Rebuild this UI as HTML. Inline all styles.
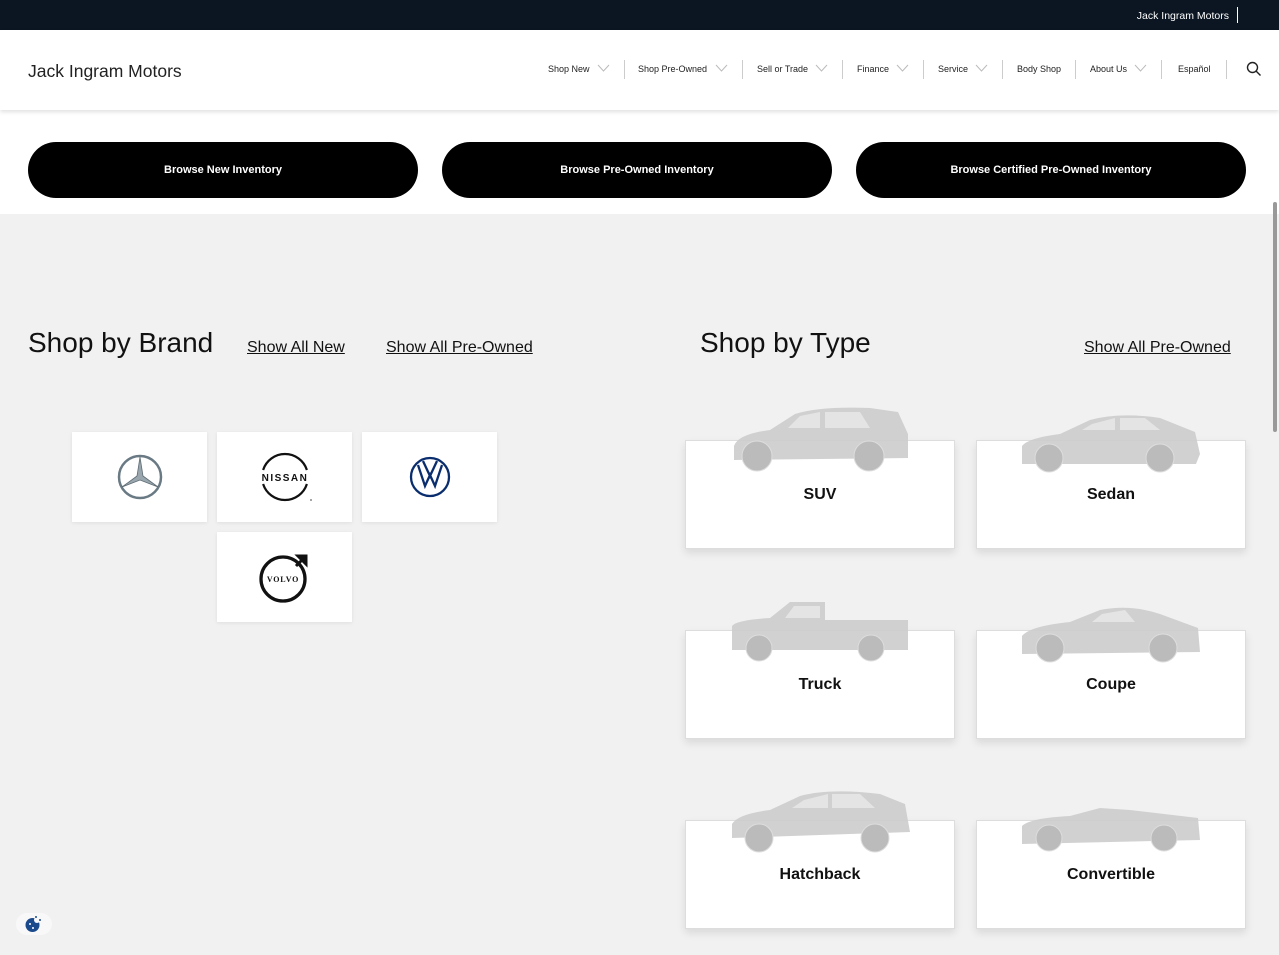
<!DOCTYPE html>
<html><head><meta charset="utf-8"><style>
*{margin:0;padding:0;box-sizing:border-box}
body{width:1279px;height:955px;overflow:hidden;background:#f1f1f1;font-family:"Liberation Sans",sans-serif;position:relative}
.top{position:absolute;left:0;top:0;width:1279px;height:30px;background:#0b1622;color:#fff;font-size:10.5px}
.top span{position:absolute;right:50px;top:10px}
.top i{position:absolute;left:1237px;top:7px;width:1px;height:16px;background:#fff}
.hdr{position:absolute;left:0;top:30px;width:1279px;height:80px;background:#fff;box-shadow:0 2px 4px rgba(0,0,0,.12);z-index:2}
.logo{position:absolute;left:28px;top:31px;font-size:17.5px;color:#222}
.nav{position:absolute;top:34px;font-size:9px;color:#222;white-space:nowrap}
.sep{position:absolute;top:30px;width:1px;height:19px;background:#ccc}
.chev{position:absolute;top:34px}
.btnrow{position:absolute;left:0;top:110px;width:1279px;height:104px;background:#fff}
.btn{position:absolute;top:32px;width:390px;height:56px;border-radius:28px;background:#000;color:#fff;font-size:11px;font-weight:bold;text-align:center;line-height:57px}
h2{position:absolute;font-weight:normal;font-size:28px;color:#111}
.lnk{position:absolute;font-size:16px;color:#111;text-decoration:underline}
.tile{position:absolute;width:135px;height:90px;background:#fff;box-shadow:0 1px 4px rgba(0,0,0,.08);display:flex;align-items:center;justify-content:center}
.card{position:absolute;width:270px;height:109px;background:#fff;border:1px solid #ddd;box-shadow:0 4px 8px rgba(0,0,0,.1);font-size:16px;font-weight:bold;color:#111;text-align:center;padding-top:45px}
.car{position:absolute}
</style></head><body>
<div class="top"><span>Jack Ingram Motors</span><i></i></div>
<div class="hdr">
<div class="logo">Jack Ingram Motors</div>
<div class="nav" style="left:548px">Shop New</div>
<div class="nav" style="left:638px">Shop Pre-Owned</div>
<div class="nav" style="left:757px">Sell or Trade</div>
<div class="nav" style="left:857px">Finance</div>
<div class="nav" style="left:938px">Service</div>
<div class="nav" style="left:1017px">Body Shop</div>
<div class="nav" style="left:1090px">About Us</div>
<div class="nav" style="left:1178px">Español</div>
<svg class="chev" style="left:597px" width="13" height="8"><path d="M1 1l5.5 6 5.5-6" fill="none" stroke="#bbb"/></svg>
<svg class="chev" style="left:715px" width="13" height="8"><path d="M1 1l5.5 6 5.5-6" fill="none" stroke="#bbb"/></svg>
<svg class="chev" style="left:815px" width="13" height="8"><path d="M1 1l5.5 6 5.5-6" fill="none" stroke="#bbb"/></svg>
<svg class="chev" style="left:896px" width="13" height="8"><path d="M1 1l5.5 6 5.5-6" fill="none" stroke="#bbb"/></svg>
<svg class="chev" style="left:975px" width="13" height="8"><path d="M1 1l5.5 6 5.5-6" fill="none" stroke="#bbb"/></svg>
<svg class="chev" style="left:1134px" width="13" height="8"><path d="M1 1l5.5 6 5.5-6" fill="none" stroke="#bbb"/></svg>
<div class="sep" style="left:624px"></div><div class="sep" style="left:742px"></div><div class="sep" style="left:842px"></div><div class="sep" style="left:923px"></div><div class="sep" style="left:1002px"></div><div class="sep" style="left:1075px"></div><div class="sep" style="left:1161px"></div><div class="sep" style="left:1226px"></div>
<svg style="position:absolute;left:1246px;top:31px" width="16" height="16"><circle cx="6.5" cy="6.5" r="5" fill="none" stroke="#222" stroke-width="1.4"/><path d="M10 10l4.5 4.5" stroke="#222" stroke-width="1.4"/></svg>
</div>
<div class="btnrow">
<div class="btn" style="left:28px">Browse New Inventory</div>
<div class="btn" style="left:442px">Browse Pre-Owned Inventory</div>
<div class="btn" style="left:856px">Browse Certified Pre-Owned Inventory</div>
</div>
<div style="position:absolute;left:1273px;top:202px;width:4px;height:230px;background:#999;border-radius:2px"></div>
<h2 style="left:28px;top:327px">Shop by Brand</h2>
<div class="lnk" style="left:247px;top:339px">Show All New</div>
<div class="lnk" style="left:386px;top:339px">Show All Pre-Owned</div>
<h2 style="left:700px;top:327px">Shop by Type</h2>
<div class="lnk" style="left:1084px;top:339px">Show All Pre-Owned</div>

<div class="tile" style="left:72px;top:432px"><svg width="46" height="46" viewBox="0 0 46 46"><circle cx="23" cy="23" r="21" fill="none" stroke="#6a7a84" stroke-width="2.5"/><path d="M23 3L26 22L41 33L23 26L5 33L20 22Z" fill="#9aa6ad" stroke="#5d6b73" stroke-width=".8"/></svg></div>
<div class="tile" style="left:217px;top:432px"><svg width="62" height="54" viewBox="0 0 62 54"><path d="M9.1 20A23 23 0 0 1 52.9 20M9.1 34A23 23 0 0 0 52.9 34" fill="none" stroke="#111" stroke-width="2.2"/><text x="31" y="31" font-size="10" font-weight="bold" letter-spacing="1.5" text-anchor="middle" font-family="Liberation Sans" fill="#111">NISSAN</text><circle cx="57" cy="50" r="1" fill="#888"/></svg></div>
<div class="tile" style="left:362px;top:432px"><svg width="42" height="42" viewBox="0 0 42 42"><circle cx="21" cy="21" r="19" fill="none" stroke="#0a2d6e" stroke-width="2.3"/><path d="M9 9L16 30L21 19L26 30L33 9M14 5L21 20L28 5" fill="none" stroke="#0a2d6e" stroke-width="2.3"/></svg></div>
<div class="tile" style="left:217px;top:532px"><svg width="54" height="54" viewBox="0 0 54 54"><circle cx="25" cy="29" r="22" fill="none" stroke="#111" stroke-width="3.3"/><path d="M38 16L46 8M40 6H48V14Z" stroke="#111" stroke-width="3" fill="#111"/><text x="25" y="32" font-size="8" font-weight="bold" letter-spacing=".8" text-anchor="middle" font-family="Liberation Serif" fill="#111">VOLVO</text></svg></div>

<div class="card" style="left:685px;top:440px">SUV</div>
<div class="card" style="left:976px;top:440px">Sedan</div>
<div class="card" style="left:685px;top:630px">Truck</div>
<div class="card" style="left:976px;top:630px">Coupe</div>
<div class="card" style="left:685px;top:820px">Hatchback</div>
<div class="card" style="left:976px;top:820px">Convertible</div>

<svg class="car" style="left:730px;top:404px" width="180" height="70" viewBox="0 0 180 70"><path d="M4 42Q8 30 40 26L65 10Q90 2 140 4L168 8L178 30L178 54L4 56Z" fill="#ccc" opacity=".9"/><path d="M70 12L90 8V24H58ZM95 8H130L140 24H95Z" fill="#e4e4e4"/><circle cx="27" cy="52" r="15" fill="#bbb" stroke="#ddd"/><circle cx="139" cy="52" r="15" fill="#bbb" stroke="#ddd"/></svg>
<svg class="car" style="left:1020px;top:412px" width="182" height="62" viewBox="0 0 182 62"><path d="M2 34Q8 26 40 22L70 8Q100 0 140 6L175 20L180 42L176 52L2 52Z" fill="#ccc" opacity=".9"/><path d="M72 12L95 6V18H62ZM100 6H125L140 18H100Z" fill="#e4e4e4"/><circle cx="29" cy="46" r="14" fill="#bbb" stroke="#ddd"/><circle cx="140" cy="46" r="14" fill="#bbb" stroke="#ddd"/></svg>
<svg class="car" style="left:730px;top:598px" width="182" height="64" viewBox="0 0 182 64"><path d="M2 28Q6 22 40 20L60 4H95V22H178V52H2Z" fill="#ccc" opacity=".9"/><path d="M64 8H90V20H55Z" fill="#e4e4e4"/><circle cx="29" cy="50" r="13" fill="#bbb" stroke="#ddd"/><circle cx="141" cy="50" r="13" fill="#bbb" stroke="#ddd"/></svg>
<svg class="car" style="left:1020px;top:604px" width="182" height="60" viewBox="0 0 182 60"><path d="M2 32Q10 22 50 18L80 6Q110 0 140 10L178 24L180 48L2 50Z" fill="#ccc" opacity=".9"/><path d="M82 10L105 6L115 18H72Z" fill="#e4e4e4"/><circle cx="30" cy="44" r="14" fill="#bbb" stroke="#ddd"/><circle cx="143" cy="44" r="14" fill="#bbb" stroke="#ddd"/></svg>
<svg class="car" style="left:730px;top:788px" width="182" height="66" viewBox="0 0 182 66"><path d="M2 36Q8 26 40 22L70 8Q100 0 150 6L175 16L180 44L2 50Z" fill="#ccc" opacity=".9"/><path d="M74 12L98 6V20H62ZM102 6H130L145 20H102Z" fill="#e4e4e4"/><circle cx="29" cy="50" r="14" fill="#bbb" stroke="#ddd"/><circle cx="145" cy="50" r="14" fill="#bbb" stroke="#ddd"/></svg>
<svg class="car" style="left:1020px;top:796px" width="182" height="58" viewBox="0 0 182 58"><path d="M2 30Q10 22 50 20L80 12L110 14L178 22L180 44L2 48Z" fill="#ccc" opacity=".9"/><circle cx="29" cy="42" r="13" fill="#bbb" stroke="#ddd"/><circle cx="144" cy="42" r="13" fill="#bbb" stroke="#ddd"/></svg>

<div style="position:absolute;left:16px;top:913px;width:36px;height:22px;border-radius:11px;background:#f8f8f8"></div>
<svg style="position:absolute;left:24px;top:915px" width="20" height="18" viewBox="0 0 20 18"><circle cx="8.5" cy="10" r="7" fill="#1a4a8c"/><circle cx="13" cy="5" r="3" fill="#f8f8f8"/><circle cx="12" cy="2" r="1" fill="#1a4a8c"/><circle cx="16" cy="5" r="1" fill="#1a4a8c"/><circle cx="6" cy="9" r="1" fill="#fff"/><circle cx="9" cy="13" r="1" fill="#fff"/></svg>
</body></html>
